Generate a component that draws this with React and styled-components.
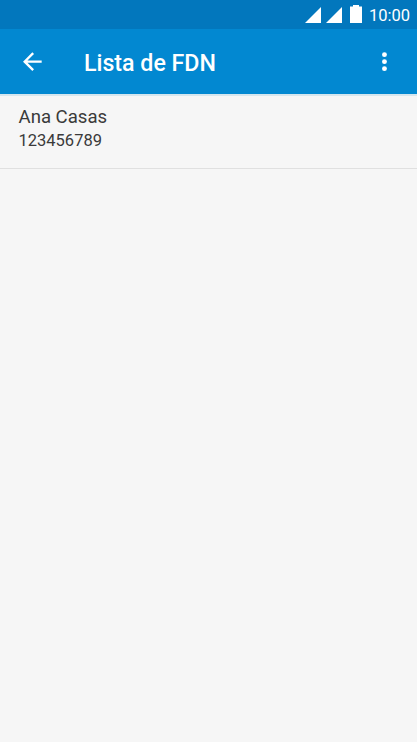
import React from 'react';
import styled, { createGlobalStyle } from 'styled-components';

const GlobalStyle = createGlobalStyle`
  * { box-sizing: border-box; }
  body { margin: 0; background: #f6f6f6; font-family: Roboto, sans-serif; }
`;

const Screen = styled.div`
  display: flex;
  flex-direction: column;
  height: 742px;
  background: #f6f6f6;
  overflow: hidden;
`;

const StatusBar = styled.div`
  display: flex;
  flex: none;
  justify-content: flex-end;
  height: 29px;
  padding-right: 7px;
  background: #0277bd;
  color: #fff;
`;

const StatusIcons = styled.svg`
  display: block;
  width: 60px;
  height: 29px;
  margin-right: 4px;
`;

const Clock = styled.span`
  font-size: 16.5px;
  line-height: 31px;
  white-space: nowrap;
`;

const AppBar = styled.header`
  display: flex;
  flex: none;
  align-items: center;
  height: 65px;
  padding: 0 19px 0 18px;
  background: #0288d1;
  color: #fff;
`;

const Icon = styled.svg`
  display: block;
  flex: none;
  width: 28px;
  height: 28px;
  fill: #fff;
`;

const Title = styled.h1`
  flex: 1;
  margin: 3px 0 0 38px;
  font-size: 23.2px;
  font-weight: 500;
  line-height: 28px;
`;

const ContactRow = styled.div`
  flex: none;
  height: 75px;
  padding: 10px 18.5px 0;
  border-top: 2px solid #d5e6ee;
  border-bottom: 1px solid #e0e0e0;
`;

const Name = styled.div`
  font-size: 18.6px;
  line-height: 23px;
  color: #3a3a3a;
`;

const PhoneNumber = styled.div`
  font-size: 16.5px;
  line-height: 23px;
  color: #3a3a3a;
`;

export default function App() {
  return (
    <Screen>
      <GlobalStyle />
      <StatusBar>
        <StatusIcons viewBox="0 0 60 29" fill="#fff">
          <path d="M0 23L16 7v16zM21 23L37 7v16zM45 23V6.5h3V5h6v1.5h3V23z" />
        </StatusIcons>
        <Clock>10:00</Clock>
      </StatusBar>
      <AppBar>
        <Icon viewBox="0 0 24 24">
          <path d="M20.3 10.7H8.13l5.59-5.59-1.42-1.41-8 8 8 8 1.41-1.41-5.58-5.59H20.3z" />
        </Icon>
        <Title>Lista de FDN</Title>
        <Icon viewBox="0 0 24 24">
          <circle cx="12.4" cy="5.7" r="2.1" />
          <circle cx="12.4" cy="11.7" r="2.1" />
          <circle cx="12.4" cy="17.7" r="2.1" />
        </Icon>
      </AppBar>
      <ContactRow>
        <Name>Ana Casas</Name>
        <PhoneNumber>123456789</PhoneNumber>
      </ContactRow>
    </Screen>
  );
}
